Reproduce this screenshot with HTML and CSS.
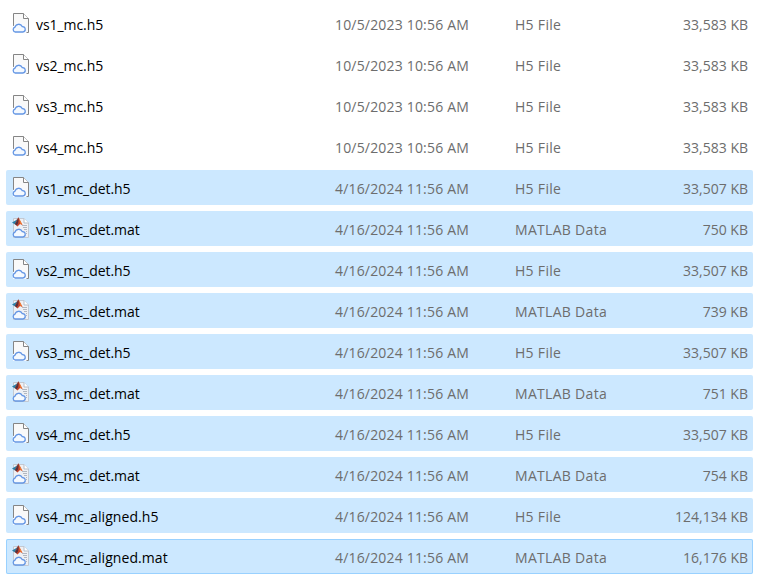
FILE: index.html
```html
<!DOCTYPE html>
<html lang="en">
<head>
<meta charset="utf-8">
<title>Files</title>
<link rel="stylesheet" href="styles.css">
</head>
<body>
<svg class="defs" aria-hidden="true">
  <symbol id="cloud" viewBox="0 0 20 22">
    <path d="M3 20A2.500 2.500 0 0 1 3 15.200A3.800 3.800 0 0 1 10.200 14.600A2.700 2.700 0 0 1 10.800 20Z" fill="#f4f9ff" stroke="#6496e4" stroke-width="1.300"/>
  </symbol>
  <symbol id="h5" viewBox="0 0 20 22">
    <path d="M1.500 1.500H11.500L16.500 6.500V20.500H1.500Z" fill="#f9f9f9" stroke="#858585"/>
    <path d="M11.500 1.500V6.500H16.500" fill="#fff" stroke="#858585"/>
    <path d="M1 14L3 13.500L5 10.500H9L12 13L14.500 15.500V21H1Z" fill="#f8faff"/>
    <use href="#cloud"/>
  </symbol>
  <symbol id="mat" viewBox="0 0 20 22">
    <path d="M1.500 1.500H12L16.500 6V20.500H1.500Z" fill="#eef0f4" stroke="#c3c9d2"/>
    <path d="M12 1.500V6H16.500" fill="#fff" stroke="#b4bdc8"/>
    <path d="M10 8.500H15M11 10.500H15M12 12.500H15M14 14.500H15M14 16.500H15" stroke="#b1b7c1"/>
    <path d="M0 5.500L3.500 3.500L5.500 2L5 7L3 7.500Z" fill="#2a7fa8"/>
    <path d="M3 7L6.300 .2L8 3.500L10.500 8L8 7L5.500 9.500Z" fill="#c4432a"/>
    <path d="M6.300 .2L6.500 3.500L6 6.500L4.500 8.500L3 7L5 4Z" fill="#56303d"/>
    <path d="M7 1L8.500 4L10.500 8L8 6.500Z" fill="#f07a35"/>
    <use href="#cloud"/>
  </symbol>
</svg>
<main class="files">
  <div class="row"><svg class="icon"><use href="#h5"/></svg><span class="name">vs1_mc.h5</span><span class="date">10/5/2023 10:56 AM</span><span class="type">H5 File</span><span class="size">33,583 KB</span></div>
  <div class="row"><svg class="icon"><use href="#h5"/></svg><span class="name">vs2_mc.h5</span><span class="date">10/5/2023 10:56 AM</span><span class="type">H5 File</span><span class="size">33,583 KB</span></div>
  <div class="row"><svg class="icon"><use href="#h5"/></svg><span class="name">vs3_mc.h5</span><span class="date">10/5/2023 10:56 AM</span><span class="type">H5 File</span><span class="size">33,583 KB</span></div>
  <div class="row"><svg class="icon"><use href="#h5"/></svg><span class="name">vs4_mc.h5</span><span class="date">10/5/2023 10:56 AM</span><span class="type">H5 File</span><span class="size">33,583 KB</span></div>
  <div class="row selected"><svg class="icon"><use href="#h5"/></svg><span class="name">vs1_mc_det.h5</span><span class="date">4/16/2024 11:56 AM</span><span class="type">H5 File</span><span class="size">33,507 KB</span></div>
  <div class="row selected"><svg class="icon"><use href="#mat"/></svg><span class="name">vs1_mc_det.mat</span><span class="date">4/16/2024 11:56 AM</span><span class="type">MATLAB Data</span><span class="size">750 KB</span></div>
  <div class="row selected"><svg class="icon"><use href="#h5"/></svg><span class="name">vs2_mc_det.h5</span><span class="date">4/16/2024 11:56 AM</span><span class="type">H5 File</span><span class="size">33,507 KB</span></div>
  <div class="row selected"><svg class="icon"><use href="#mat"/></svg><span class="name">vs2_mc_det.mat</span><span class="date">4/16/2024 11:56 AM</span><span class="type">MATLAB Data</span><span class="size">739 KB</span></div>
  <div class="row selected"><svg class="icon"><use href="#h5"/></svg><span class="name">vs3_mc_det.h5</span><span class="date">4/16/2024 11:56 AM</span><span class="type">H5 File</span><span class="size">33,507 KB</span></div>
  <div class="row selected"><svg class="icon"><use href="#mat"/></svg><span class="name">vs3_mc_det.mat</span><span class="date">4/16/2024 11:56 AM</span><span class="type">MATLAB Data</span><span class="size">751 KB</span></div>
  <div class="row selected"><svg class="icon"><use href="#h5"/></svg><span class="name">vs4_mc_det.h5</span><span class="date">4/16/2024 11:56 AM</span><span class="type">H5 File</span><span class="size">33,507 KB</span></div>
  <div class="row selected"><svg class="icon"><use href="#mat"/></svg><span class="name">vs4_mc_det.mat</span><span class="date">4/16/2024 11:56 AM</span><span class="type">MATLAB Data</span><span class="size">754 KB</span></div>
  <div class="row selected"><svg class="icon"><use href="#h5"/></svg><span class="name long">vs4_mc_aligned.h5</span><span class="date">4/16/2024 11:56 AM</span><span class="type">H5 File</span><span class="size">124,134 KB</span></div>
  <div class="row selected focused"><svg class="icon"><use href="#mat"/></svg><span class="name long">vs4_mc_aligned.mat</span><span class="date">4/16/2024 11:56 AM</span><span class="type">MATLAB Data</span><span class="size">16,176 KB</span></div>
</main>
</body>
</html>
```

FILE: styles.css
```css
* { box-sizing: border-box; }
body {
  margin: 0;
  background: #fff;
  font-family: "Open Sans", "Noto Sans", sans-serif;
  font-size: 14px;
  overflow: hidden;
}
.defs { display: none; }
.files {
  display: flex;
  flex-direction: column;
  gap: 6px;
  padding: 6px 5px 3px 6px;
}
.row {
  display: grid;
  grid-template-columns: 24px 299px 180px 110px 1fr;
  align-items: center;
  height: 35px;
  padding: 0 5px 0 6px;
  border-radius: 2px;
  line-height: 20px;
  white-space: nowrap;
  color: #6d6d6d;
}
.row span { padding-top: 2px; }
.icon {
  width: 20px;
  height: 22px;
  margin-top: -1px;
}
.name { color: #000; letter-spacing: -0.06px; }
.long { letter-spacing: 0.07px; }
.date { letter-spacing: 0.18px; }
.type { letter-spacing: 0.3px; }
.size { text-align: right; }
.selected { background: #cce8ff; }
.focused { box-shadow: inset 0 0 0 1px #99d1ff; }
```
